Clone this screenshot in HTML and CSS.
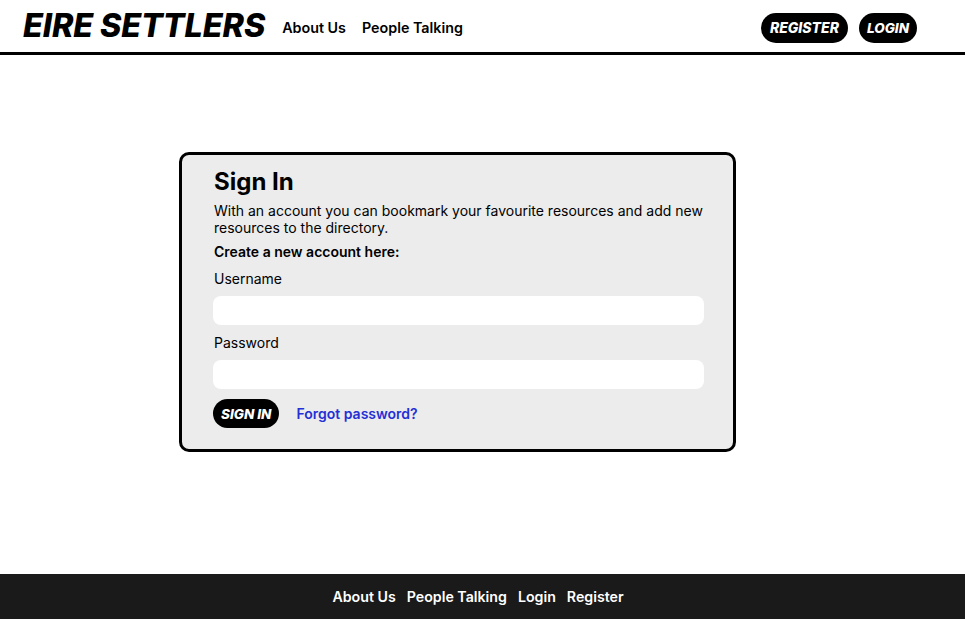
FILE: index.html
```html
<!DOCTYPE html>
<html lang="en">
<head>
<meta charset="utf-8">
<title>Eire Settlers - Sign In</title>
<link rel="stylesheet" href="styles.css">
</head>
<body>
<div class="page">
  <header class="site-header">
    <div class="brand-group">
      <a class="logo" href="#">EIRE SETTLERS</a>
      <nav class="main-nav">
        <a href="#">About Us</a>
        <a href="#">People Talking</a>
      </nav>
    </div>
    <div class="auth-buttons">
      <a class="pill" href="#">REGISTER</a>
      <a class="pill pill-login" href="#">LOGIN</a>
    </div>
  </header>
  <main class="content">
    <section class="card">
      <h1 class="card-title">Sign In</h1>
      <p class="card-text">With an account you can bookmark your favourite resources and add new resources to the directory.</p>
      <p class="card-strong">Create a new account here:</p>
      <label class="field-label" for="username">Username</label>
      <input class="field" id="username" type="text">
      <label class="field-label field-label-next" for="password">Password</label>
      <input class="field" id="password" type="password">
      <div class="actions">
        <button class="pill pill-small" type="button">SIGN IN</button>
        <a class="forgot" href="#">Forgot password?</a>
      </div>
    </section>
  </main>
  <footer class="site-footer">
    <a href="#">About Us</a>
    <a href="#">People Talking</a>
    <a href="#">Login</a>
    <a href="#">Register</a>
  </footer>
</div>
</body>
</html>
```

FILE: styles.css
```css
* { box-sizing: border-box; }
html, body { margin: 0; padding: 0; }
body {
  font-family: Inter, "Noto Sans", sans-serif;
  color: #000;
  background: #fff;
}
a { color: inherit; text-decoration: none; }
.page {
  min-height: 619px;
  display: flex;
  flex-direction: column;
}
.site-header {
  height: 55px;
  border-bottom: 3px solid #000;
  display: flex;
  align-items: center;
  justify-content: space-between;
  padding: 0 48px 0 23px;
}
.brand-group {
  display: flex;
  align-items: center;
  gap: 17px;
}
.logo {
  font-size: 32.3px;
  font-weight: 800;
  font-style: italic;
  letter-spacing: -0.1px;
  line-height: 1;
}
.main-nav {
  display: flex;
  gap: 16px;
  font-size: 14.3px;
  font-weight: 600;
  padding-top: 3px;
}
.auth-buttons {
  display: flex;
  gap: 11px;
  padding-top: 3px;
}
.pill {
  display: inline-flex;
  align-items: center;
  height: 30px;
  padding: 0 9px;
  border-radius: 15px;
  background: #000;
  color: #fff;
  font-family: Inter, sans-serif;
  font-weight: 800;
  font-style: italic;
  font-size: 14px;
  border: none;
}
.pill-login {
  padding: 0 8px;
  font-size: 13.5px;
}
.content {
  flex: 1;
  padding: 97px 0 0 179px;
}
.card {
  width: 557px;
  background: #ececec;
  border: 3px solid #000;
  border-radius: 10px;
  padding: 11px 29px 21px 32px;
  display: flex;
  flex-direction: column;
}
.card-title {
  margin: 0;
  font-size: 24px;
  font-weight: 700;
  line-height: 32px;
}
.card-text {
  margin: 4px 0 0;
  font-size: 14px;
  line-height: 17px;
}
.card-strong {
  margin: 7px 0 0;
  font-size: 14px;
  font-weight: 600;
  line-height: 17px;
}
.field-label {
  margin-top: 10px;
  font-size: 14px;
  line-height: 17px;
}
.field-label-next {
  margin-top: 9px;
}
.field {
  margin-top: 9px;
  height: 29px;
  border: none;
  border-radius: 8px;
  background: #fff;
  margin-left: -1px;
}
.actions {
  margin-top: 10px;
  display: flex;
  align-items: center;
  gap: 17px;
}
.pill-small {
  height: 29px;
  padding: 0 8px;
  margin-left: -1px;
  font-size: 13.5px;
}
.forgot {
  color: #2430d6;
  font-size: 14px;
  font-weight: 600;
}
.site-footer {
  height: 45px;
  background: #1a1a1a;
  color: #fff;
  display: flex;
  justify-content: center;
  align-items: center;
  gap: 11px;
  padding-right: 9px;
  font-size: 14.2px;
  font-weight: 600;
}
```
